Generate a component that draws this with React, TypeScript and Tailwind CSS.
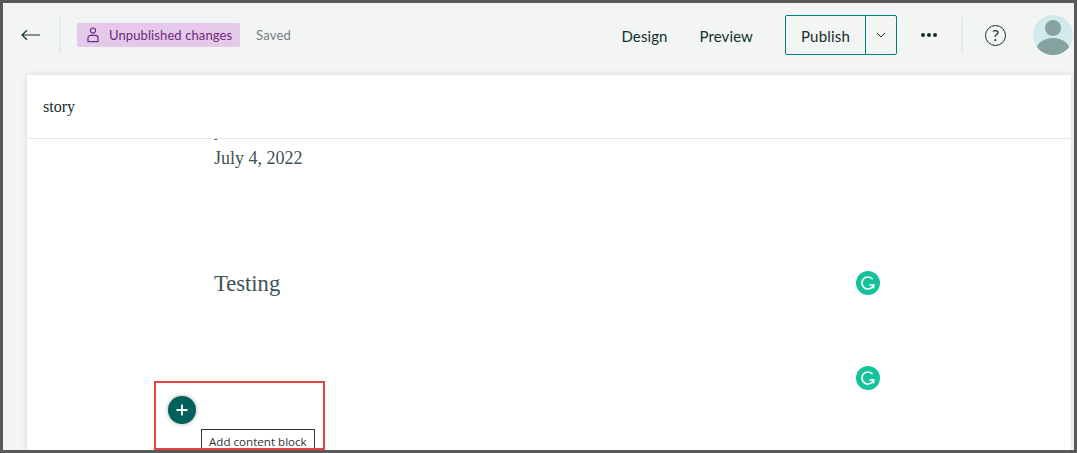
const sans = { fontFamily: 'Lato, "Noto Sans", sans-serif' };
const serif = { fontFamily: '"Liberation Serif", serif' };

function BackArrow() {
  return (
    <svg width="20" height="12" viewBox="0 0 20 12" fill="none" stroke="#12302c" strokeWidth="1.2">
      <path d="M1 6h18M6 1.2L1 6l5 4.8" />
    </svg>
  );
}

function PersonIcon() {
  return (
    <svg width="12" height="16" viewBox="0 0 12 16" fill="none" stroke="#6b2c7e" strokeWidth="1.2">
      <circle cx="6" cy="3.6" r="2.6" />
      <path d="M1 14.6V11a2.6 2.6 0 0 1 2.6-2.6h4.8A2.6 2.6 0 0 1 11 11v3.6z" />
    </svg>
  );
}

function Avatar() {
  return (
    <svg width="40" height="40" viewBox="0 0 40 40">
      <defs>
        <clipPath id="avatar-clip">
          <circle cx="20" cy="20" r="20" />
        </clipPath>
      </defs>
      <g clipPath="url(#avatar-clip)">
        <rect width="40" height="40" fill="#d3eaea" />
        <circle cx="20" cy="13" r="8" fill="#86a3a1" />
        <ellipse cx="20" cy="36" rx="17" ry="13" fill="#86a3a1" />
      </g>
    </svg>
  );
}

function GrammarlyBadge() {
  return (
    <div className="flex h-6 w-6 items-center justify-center rounded-full bg-[#15c39a]">
      <svg width="16" height="16" viewBox="0 0 16 16" fill="none" stroke="#fff" strokeWidth="1.6">
        <path d="M12.6 4.2A6 6 0 1 0 13.6 10H9.4" />
        <path d="M13.6 13.4V9.6" />
      </svg>
    </div>
  );
}

export default function App() {
  return (
    <div className="h-[453px] w-[1077px] overflow-hidden border-[3px] border-[#595959] bg-[#f3f5f4]" style={sans}>
      <header className="flex h-[72px] items-center pb-2">
        <button className="ml-[18px] flex h-6 w-5 items-center justify-center">
          <BackArrow />
        </button>
        <div className="ml-[18px] h-9 w-0.5 bg-[#e4ecea]" />
        <div className="ml-4 flex h-6 w-[163px] items-center rounded-[2px] bg-[#e5c9e8] pl-2.5 text-[13px] tracking-[0.1px] text-[#6b2c7e]">
          <PersonIcon />
          <span className="ml-[10px] pt-0.5">Unpublished changes</span>
        </div>
        <span className="ml-4 pt-0.5 text-[13px] tracking-[0.2px] text-[#6f7f80]">Saved</span>

        <nav className="ml-auto flex items-center pt-0.5 text-[15px] tracking-[0.1px] text-[#12302c]">
          <span>Design</span>
          <span className="ml-8">Preview</span>
        </nav>
        <div className="ml-[32px] flex h-10 w-[112px] items-center rounded-[2px] border border-[#007f78] text-[15px] tracking-[0.2px] text-[#12302c]">
          <span className="flex h-full w-20 items-center justify-center border-r border-[#007f78] pt-0.5">Publish</span>
          <span className="flex flex-1 items-center justify-center">
            <svg width="10" height="6" viewBox="0 0 10 6" fill="none" stroke="#12302c" strokeWidth="1">
              <path d="M1 1l4 4 4-4" />
            </svg>
          </span>
        </div>
        <div className="ml-6 flex gap-[2px]">
          <span className="h-1 w-1 rounded-full bg-[#12302c]" />
          <span className="h-1 w-1 rounded-full bg-[#12302c]" />
          <span className="h-1 w-1 rounded-full bg-[#12302c]" />
        </div>
        <div className="ml-6 h-9 w-0.5 bg-[#e4ecea]" />
        <div className="ml-[22px] flex h-[21px] w-[21px] items-center justify-center rounded-full border border-[#12302c] text-[16px] leading-none text-[#12302c]">
          ?
        </div>
        <div className="ml-[27px] mr-px">
          <Avatar />
        </div>
      </header>

      <main className="relative ml-6 mr-[3px] h-[375px] overflow-hidden bg-white shadow-[0_0_6px_rgba(0,0,0,0.12)]">
        <div className="flex h-[64px] items-center border-b border-[#e8e8e8] pl-4 text-[16px] text-[#12302c]" style={serif}>
          story
        </div>
        <div className="h-[311px] overflow-hidden pl-[187px]" style={serif}>
          <p className="-mt-[20px] h-[22px] text-[18px] leading-[22px] text-[#3d5254]">y</p>
          <p className="mt-[5px] text-[18px] leading-6 text-[#3d5254]">July 4, 2022</p>
          <div className="mt-[97px] flex w-[666px] items-center justify-between">
            <p className="pt-[2px] text-[22.6px] leading-[30px] text-[#3d5254]">Testing</p>
            <GrammarlyBadge />
          </div>
          <div className="mt-[67px] flex w-[666px] justify-end">
            <GrammarlyBadge />
          </div>
        </div>

        {/* red annotation box around the add block control */}
        <div className="absolute left-[127px] top-[306px] h-[69px] w-[171px] overflow-hidden border-2 border-[#e8433f]">
          <div className="absolute left-3 top-[13px] flex h-7 w-7 items-center justify-center rounded-full bg-[#00615c] shadow-[0_0_4px_rgba(0,0,0,0.35)]">
            <svg width="12" height="12" viewBox="0 0 12 12" stroke="#fff" strokeWidth="1.8">
              <path d="M6 0.5v11M0.5 6h11" />
            </svg>
          </div>
          <div className="absolute left-[45px] top-[46px] border border-[#333] bg-white px-[7px] pb-1 pt-1 text-[11.6px] leading-4 whitespace-nowrap text-[#333]" style={{ fontFamily: '"Open Sans", sans-serif' }}>
            Add content block
          </div>
        </div>
      </main>
    </div>
  );
}
